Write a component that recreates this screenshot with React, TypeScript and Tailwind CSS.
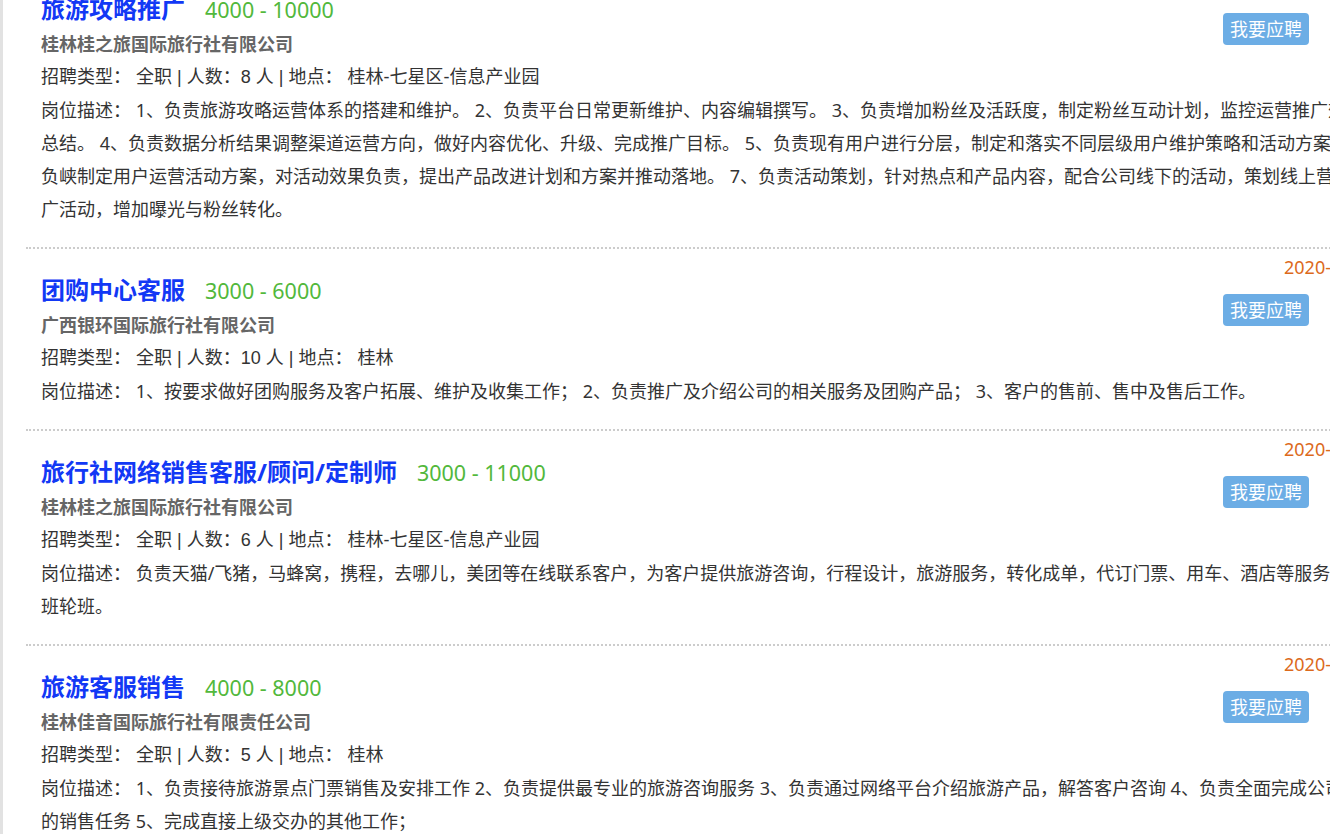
import React from "react";

type Job = {
  date: string;
  title: string;
  salary: string;
  company: string;
  type: string;
  count: number;
  place: string;
  lines: string[];
};

const jobs: Job[] = [
  {
    date: "2020-05-20",
    title: "旅游攻略推广",
    salary: "4000 - 10000",
    company: "桂林桂之旅国际旅行社有限公司",
    type: "全职",
    count: 8,
    place: "桂林-七星区-信息产业园",
    lines: [
      "岗位描述： 1、负责旅游攻略运营体系的搭建和维护。 2、负责平台日常更新维护、内容编辑撰写。 3、负责增加粉丝及活跃度，制定粉丝互动计划，监控运营推广效果并进行分析",
      "总结。 4、负责数据分析结果调整渠道运营方向，做好内容优化、升级、完成推广目标。 5、负责现有用户进行分层，制定和落实不同层级用户维护策略和活动方案。 6、",
      "负峡制定用户运营活动方案，对活动效果负责，提出产品改进计划和方案并推动落地。 7、负责活动策划，针对热点和产品内容，配合公司线下的活动，策划线上营销推",
      "广活动，增加曝光与粉丝转化。",
    ],
  },
  {
    date: "2020-05-18",
    title: "团购中心客服",
    salary: "3000 - 6000",
    company: "广西银环国际旅行社有限公司",
    type: "全职",
    count: 10,
    place: "桂林",
    lines: [
      "岗位描述： 1、按要求做好团购服务及客户拓展、维护及收集工作； 2、负责推广及介绍公司的相关服务及团购产品； 3、客户的售前、售中及售后工作。",
    ],
  },
  {
    date: "2020-05-15",
    title: "旅行社网络销售客服/顾问/定制师",
    salary: "3000 - 11000",
    company: "桂林桂之旅国际旅行社有限公司",
    type: "全职",
    count: 6,
    place: "桂林-七星区-信息产业园",
    lines: [
      "岗位描述： 负责天猫/飞猪，马蜂窝，携程，去哪儿，美团等在线联系客户，为客户提供旅游咨询，行程设计，旅游服务，转化成单，代订门票、用车、酒店等服务，需早晚",
      "班轮班。",
    ],
  },
  {
    date: "2020-05-12",
    title: "旅游客服销售",
    salary: "4000 - 8000",
    company: "桂林佳音国际旅行社有限责任公司",
    type: "全职",
    count: 5,
    place: "桂林",
    lines: [
      "岗位描述： 1、负责接待旅游景点门票销售及安排工作 2、负责提供最专业的旅游咨询服务 3、负责通过网络平台介绍旅游产品，解答客户咨询 4、负责全面完成公司",
      "的销售任务 5、完成直接上级交办的其他工作；",
    ],
  },
];

const JobItem = ({ job, last }: { job: Job; last: boolean }) => {
  return (
    <div
      className={
        last
          ? "px-[15px] pt-[6px] pb-[21px]"
          : "px-[15px] pt-[6px] pb-[21px] border-b-2 border-dotted border-[#cccccc]"
      }
    >
      <div className="flex">
        <div className="flex-1 pt-[16px]">
          <div className="flex h-[37px] items-baseline leading-[37px] whitespace-nowrap">
            <span className="text-[24px] font-bold text-[#1238f5]">{job.title}</span>
            <span className="ml-[20px] text-[21.5px] text-[#52b83c]">{job.salary}</span>
          </div>
          <div className="mt-[1px] text-[18px] font-bold leading-[33px] text-[#666666]">{job.company}</div>
        </div>
        <div className="flex w-[208px] shrink-0 flex-col items-start">
          <div className="ml-[61px] whitespace-nowrap text-[18px] leading-[24px] text-[#dc6a1c]">
            {job.date}
          </div>
          <button className="mt-[15px] h-[32px] w-[86px] rounded-[4px] bg-[#6cade5] text-[18px] leading-[32px] text-white">
            我要应聘
          </button>
        </div>
      </div>
      <div className="whitespace-nowrap font-['Liberation_Sans','Noto_Sans_CJK_SC',sans-serif] text-[18px] leading-[33px]">
        招聘类型： {job.type} | 人数：{job.count} 人 | 地点： {job.place}
      </div>
      {job.lines.map((line, i) => (
        <div key={i} className="whitespace-nowrap text-[18px] leading-[33px]">
          {line}
        </div>
      ))}
    </div>
  );
};

export default function App() {
  return (
    <div className="flex h-[834px] w-[1330px] overflow-hidden bg-white font-['Noto_Sans','Noto_Sans_CJK_SC',sans-serif] text-[#333333]">
      <div className="w-[3px] shrink-0 bg-[#e2e2e2]" />
      <div className="ml-[23px] -mt-[32px] w-[1420px] shrink-0">
        {jobs.map((job, i) => (
          <JobItem key={i} job={job} last={i === jobs.length - 1} />
        ))}
      </div>
    </div>
  );
}
